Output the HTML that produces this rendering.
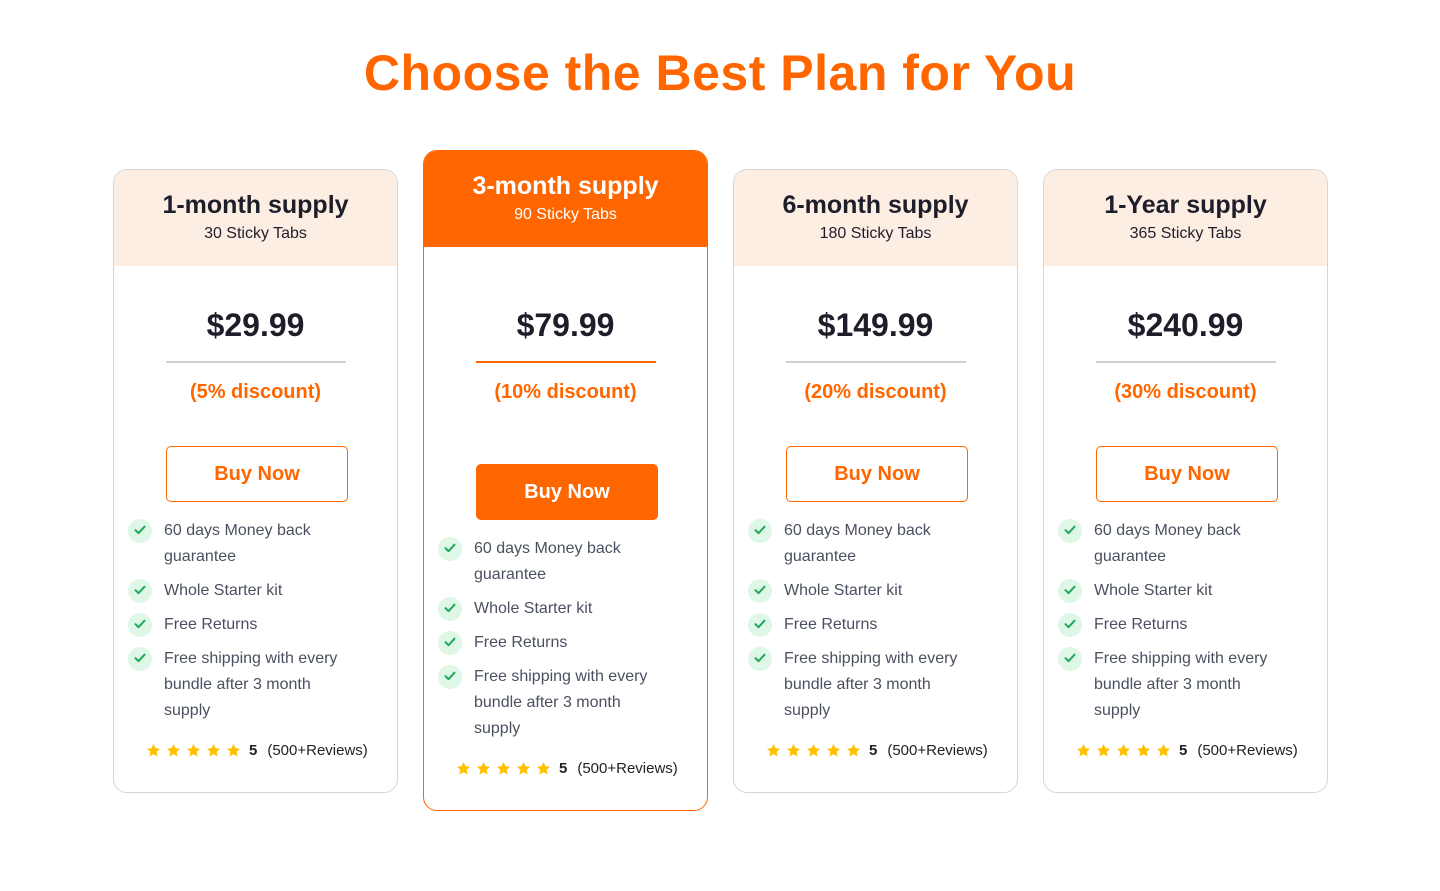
<!DOCTYPE html>
<html><head><meta charset="utf-8"><style>
*{box-sizing:border-box;margin:0;padding:0}
body{width:1440px;height:891px;background:#fff;font-family:"Liberation Sans",sans-serif;position:relative;overflow:hidden}
h1{position:absolute;top:44px;left:0;width:1440px;text-align:center;color:#ff6600;font-size:50px;font-weight:bold;letter-spacing:0.5px}
.card{position:absolute;width:285px;border:1px solid #d6d6d6;border-radius:14px;overflow:hidden;background:#fff}
.card.f{border-color:#ff6600}
.hd{position:absolute;left:0;top:0;width:100%;height:96px;background:#fdeee4;text-align:center;color:#1e1e2a}
.f .hd{background:#ff6600;color:#fff}
.hd .t{position:absolute;top:21px;width:100%;font-size:25px;font-weight:bold}
.hd .s{position:absolute;top:55px;width:100%;font-size:16px}
.pr{position:absolute;left:0;width:100%;text-align:center;font-size:32px;font-weight:bold;color:#1e1e2a}
.ln{position:absolute;left:52px;width:180px;height:2px;background:#d0d0d0}
.f .ln{background:#ff6600}
.dc{position:absolute;left:0;width:100%;text-align:center;font-size:20px;font-weight:bold;color:#ff6600}
.btn{position:absolute;left:52px;width:182px;height:56px;border:1px solid #ff6600;border-radius:5px;color:#ff6600;font-size:20px;font-weight:bold;text-align:center;line-height:54px}
.f .btn{background:#ff6600;color:#fff}
.ft{position:absolute;left:14px;width:260px}
.it{position:relative;padding-left:36px;font-size:16px;line-height:26px;color:#4a5060;margin-bottom:8px}
.it:before{content:"";position:absolute;left:0;top:1px;width:24px;height:24px;border-radius:50%;background:#dff7e6}
.it svg{position:absolute;left:6px;top:7px}
.rv{position:absolute;left:32px;font-size:15px;color:#222;display:flex;align-items:center}
.rv b{margin:0 10px 0 3px}
</style></head><body>
<h1>Choose the Best Plan for You</h1>
<script>
const plans=[["1-month supply","30 Sticky Tabs","$29.99","(5% discount)",113,0],["3-month supply","90 Sticky Tabs","$79.99","(10% discount)",423,1],["6-month supply","180 Sticky Tabs","$149.99","(20% discount)",733,0],["1-Year supply","365 Sticky Tabs","$240.99","(30% discount)",1043,0]];
const chk='<svg width="12" height="10" viewBox="0 0 12 10"><path d="M1.5 5.2l3 3 6-6.5" fill="none" stroke="#1fa85a" stroke-width="2" stroke-linecap="round" stroke-linejoin="round"/></svg>';
const star='<svg width="15" height="15" viewBox="0 0 24 24" style="margin-right:5px"><path d="M12 1.5l3.2 6.9 7.3.8-5.5 5 1.6 7.4L12 17.8l-6.6 3.8 1.6-7.4-5.5-5 7.3-.8z" fill="#ffc000"/></svg>';
let h='';
for(const[p,s,pr,d,x,f] of plans){
 const top=f?150:169, ht=f?661:624, o=f?18:0;
 const y=v=>v-top;
 h+=`<div class="card${f?' f':''}" style="left:${x}px;top:${top}px;height:${ht}px">
 <div class="hd"><div class="t">${p}</div><div class="s">${s}</div></div>
 <div class="pr" style="top:${y(306)}px">${pr}</div>
 <div class="ln" style="top:${y(360)}px"></div>
 <div class="dc" style="top:${y(380)}px">${d}</div>
 <div class="btn" style="top:${y(445+o)}px">Buy Now</div>
 <div class="ft" style="top:${y(517+o)}px">
 <div class="it">${chk}60 days Money back<br>guarantee</div>
 <div class="it">${chk}Whole Starter kit</div>
 <div class="it">${chk}Free Returns</div>
 <div class="it">${chk}Free shipping with every<br>bundle after 3 month<br>supply</div></div>
 <div class="rv" style="top:${y(741+o)}px">${star.repeat(5)}<b>5</b>(500+Reviews)</div>
 </div>`;
}
document.write(h);
</script>
</body></html>
